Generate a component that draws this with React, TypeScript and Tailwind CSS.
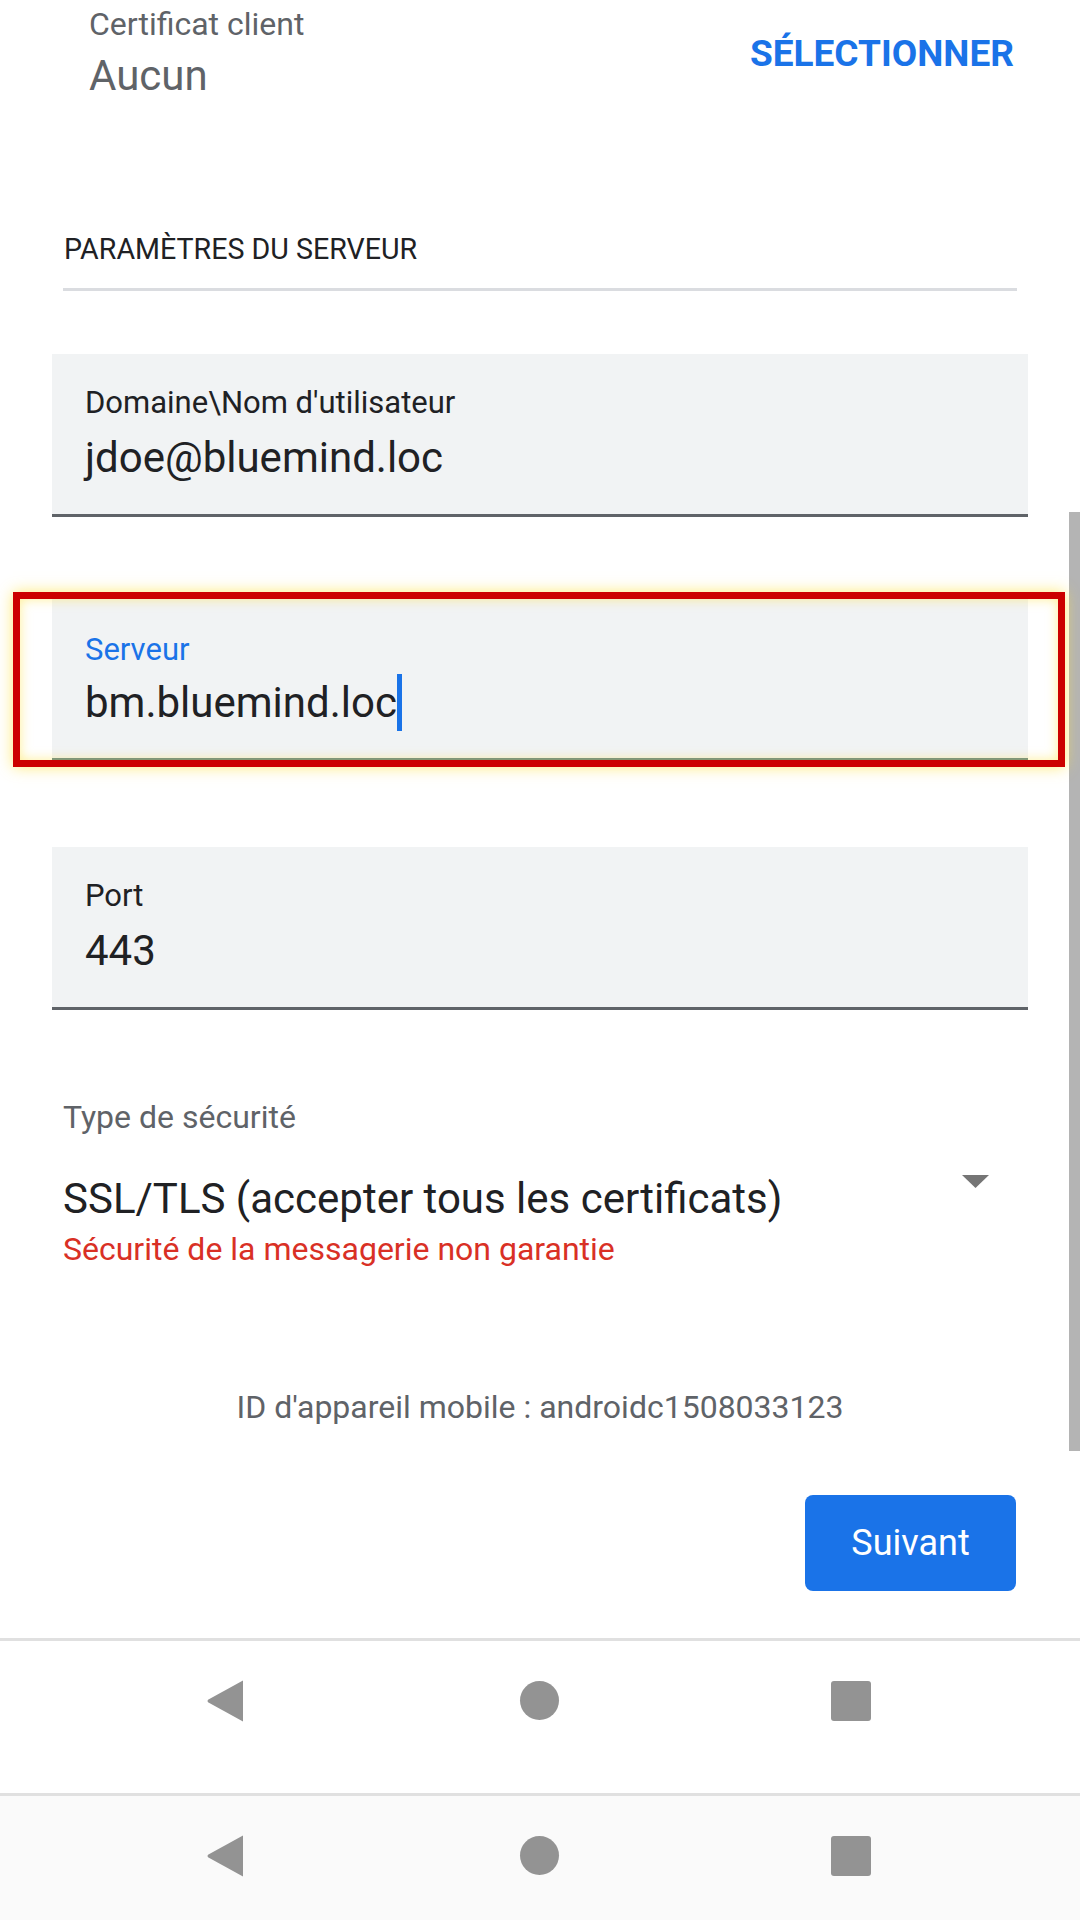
const Field = ({ label, value }: { label: string; value: string }) => {
  return (
    <div className="ml-[52px] w-[976px] h-[163px] bg-[#f1f3f4] border-b-[3px] border-[#5f6368] pl-[33px] pt-[33px]">
      <div className="text-[31px] leading-none text-[#202124]">{label}</div>
      <div className="mt-[19.5px] text-[42px] leading-none text-[#202124]">{value}</div>
    </div>
  );
};

const NavBar = ({ bg }: { bg: string }) => {
  return (
    <div className={`h-[152px] flex items-start pt-[39px] pl-[207px] ${bg}`}>
      <svg width="36" height="42" viewBox="0 0 36 42">
        <path d="M36 0.5 L36 41.5 L1 22.2 Q0 21 1 19.8 Z" fill="#939393" />
      </svg>
      <div className="ml-[277px] mt-[1px] w-[39px] h-[39px] rounded-full bg-[#939393]" />
      <div className="ml-[272px] mt-[1px] w-[40px] h-[40px] rounded-[3px] bg-[#939393]" />
    </div>
  );
};

export default function App() {
  return (
    <div className="relative w-[1080px] h-[1920px] overflow-hidden bg-white font-['Roboto',sans-serif]">
      {/* scrollbar */}
      <div className="absolute right-0 top-[512px] w-[11px] h-[939px] bg-[#b4b4b4]" />

      {/* client certificate */}
      <div className="h-[100px] flex justify-between">
        <div className="pl-[89px] pt-[8px]">
          <div className="text-[32px] leading-none text-[#5f6368]">Certificat client</div>
          <div className="mt-[14.5px] text-[42px] leading-none text-[#5f6368]">Aucun</div>
        </div>
        <div className="pt-[34.5px] pr-[66px] text-[37px] leading-none font-bold text-[#1a73e8]">
          SÉLECTIONNER
        </div>
      </div>

      {/* section header */}
      <div className="ml-[64px] mt-[135px] text-[28.6px] leading-none text-[#202124]">
        PARAMÈTRES DU SERVEUR
      </div>
      <div className="ml-[63px] mt-[24.4px] w-[954px] h-[3px] bg-[#dadce0]" />

      <div className="mt-[63px]">
        <Field label="Domaine\Nom d'utilisateur" value="jdoe@bluemind.loc" />
      </div>

      {/* highlighted server field */}
      <div className="relative mt-[75px] ml-[13px] w-[1052px] border-[7px] border-[#cc0000] pl-[32px] pr-[30px] shadow-[0_0_14px_rgba(255,225,60,0.7)]">
        <div className="h-[161px] bg-[#f1f3f4] border-b-[2px] border-[#5e8189] pl-[33px] pt-[35px]">
          <div className="text-[31px] leading-none text-[#1a73e8]">Serveur</div>
          <div className="mt-[17.5px] relative inline-block text-[42px] leading-none text-[#202124]">
            bm.bluemind.loc
            <span className="absolute right-[-5px] top-[-8.5px] w-[4.5px] h-[57px] bg-[#1a73e8]" />
          </div>
        </div>
        <div className="absolute inset-0 pointer-events-none shadow-[inset_0_0_12px_rgba(255,225,60,0.55)]" />
      </div>

      <div className="mt-[80px]">
        <Field label="Port" value="443" />
      </div>

      {/* security type */}
      <div className="ml-[63px] mt-[91px] text-[32px] leading-none text-[#5f6368]">Type de sécurité</div>
      <div className="mt-[45.5px] pl-[63px] pr-[91px] flex justify-between items-start">
        <div className="text-[42px] leading-none text-[#202124]">SSL/TLS (accepter tous les certificats)</div>
        <svg className="-mt-[3px]" width="27" height="13" viewBox="0 0 27 13">
          <path d="M0 0 L27 0 L13.5 13 Z" fill="#757575" />
        </svg>
      </div>
      <div className="ml-[63px] mt-[12.5px] text-[32px] leading-none text-[#d93025]">
        Sécurité de la messagerie non garantie
      </div>

      <div className="mt-[126px] text-center text-[32px] leading-none text-[#5f6368]">
        ID d'appareil mobile : androidc1508033123
      </div>

      <div className="mt-[72px] flex justify-end pr-[64px]">
        <button className="w-[211px] h-[96px] rounded-[8px] bg-[#1a73e8] text-white text-[36px] font-normal">
          Suivant
        </button>
      </div>

      {/* navigation bars */}
      <div className="mt-[47px] h-[3px] bg-[#e0e0e0]" />
      <NavBar bg="bg-white" />
      <div className="h-[3px] bg-[#e0e0e0]" />
      <NavBar bg="bg-[#fafafa]" />
    </div>
  );
}
